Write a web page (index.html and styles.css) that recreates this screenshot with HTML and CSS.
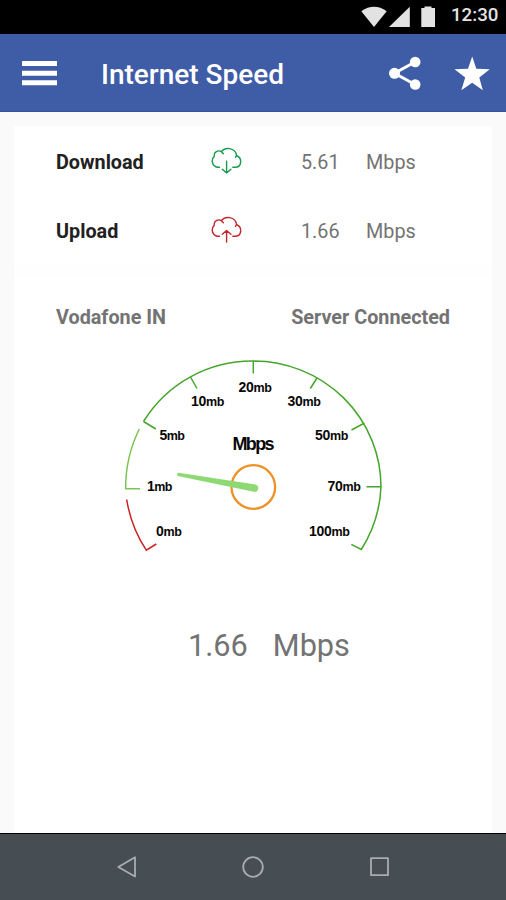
FILE: index.html
```html
<!DOCTYPE html>
<html lang="en">
<head>
<meta charset="utf-8">
<title>Internet Speed</title>
<link rel="stylesheet" href="styles.css">
</head>
<body>
<header class="status">
  <svg class="status-icons" viewBox="360 0 76 34"><path d="M361.3 11.2Q374 2.300 386.700 11.200L374 27Z"/><path d="M409.800 6.700V27H389Z"/><path d="M421.300 8h3.200V6.500h7V8h3.500V27h-13.700Z"/></svg>
  <span class="clock">12:30</span>
</header>
<nav class="appbar">
  <svg class="menu" viewBox="0 0 36 26"><path d="M0 1h35v5H0zM0 10.800h35v5H0zM0 20.300h35v5H0z"/></svg>
  <h1>Internet Speed</h1>
  <svg class="share" viewBox="388 55 34 36"><path class="link" d="M415 62L394.500 73.300L415 84.500"/><circle cx="394.500" cy="73.300" r="5.500"/><circle cx="415.200" cy="62" r="5.300"/><circle cx="415.200" cy="84.500" r="5.300"/></svg>
  <svg class="star" viewBox="454 55 36 36"><path d="M472.200 56.500L476.300 68.800L489.800 69.200L479.300 77.500L482.800 90.200L472.200 82.800L461.300 90.200L465.200 77.500L454.500 69.200L468 68.800Z"/></svg>
</nav>
<main>
  <section class="card speeds">
    <div class="row">
      <b>Download</b>
      <svg class="cloud down" viewBox="0 0 32 28"><path d="M9.500 20.300H7.500A6.500 6.500 0 0 1 4.300 9.200C3.500 5.300 8 2.500 11.500 4.700L13.300 6.800M11.500 4.700C14.500-.3 25.500.3 26.500 8.500L25.500 10.300M26.500 8.500C32.500 11 32 20.300 25 20.300H22.800M16.600 14.200V26M12.300 22.200L16.600 26L20.900 22.200"/></svg>
      <span>5.61</span><span>Mbps</span>
    </div>
    <div class="row">
      <b>Upload</b>
      <svg class="cloud up" viewBox="0 0 32 28"><path d="M9.500 20.300H7.500A6.500 6.500 0 0 1 4.300 9.200C3.500 5.300 8 2.500 11.500 4.700L13.300 6.800M11.500 4.700C14.500-.3 25.500.3 26.500 8.500L25.500 10.300M26.500 8.500C32.500 11 32 20.300 25 20.300H22.800M16.600 26V14.500M12.300 18.300L16.600 14.500L20.900 18.300"/></svg>
      <span>1.66</span><span>Mbps</span>
    </div>
  </section>
  <section class="card test">
    <div class="provider"><b>Vodafone IN</b><b>Server Connected</b></div>
    <svg class="gauge" viewBox="110 350 290 220">
      <path class="green" d="M143.500 421.500A127.700 127.700 0 0 1 253.300 361A127.700 126 0 0 1 381 487A127.700 127.700 0 0 1 361.300 549.500L351.300 544.300M143.500 421.500L155.800 429M190.500 377L197 388.500M253.300 361V373.500M317 378L310.300 388.500M364.500 423L351.500 430M366.500 486.700H381"/>
      <path class="light" d="M139.300 429A132 132 0 0 0 125.700 488.700H140"/>
      <path class="red" d="M126.700 499.500A128 128 0 0 0 146.300 550.200L156.300 544"/>
      <circle cx="253.300" cy="487" r="21.800"/>
      <path class="needle" d="M178.500 472.700L255.500 484.500A3.700 3.700 0 0 1 253.800 491.700L177.800 476Q175.800 474 178.500 472.700Z"/>
      <g class="marks">
        <text x="156" y="536" textLength="26">0<tspan>mb</tspan></text>
        <text x="147" y="491" textLength="25.500">1<tspan>mb</tspan></text>
        <text x="159.500" y="440" textLength="25.500">5<tspan>mb</tspan></text>
        <text x="191" y="406" textLength="33.500">10<tspan>mb</tspan></text>
        <text x="238.500" y="391.500" textLength="33.500">20<tspan>mb</tspan></text>
        <text x="287.500" y="406" textLength="33.500">30<tspan>mb</tspan></text>
        <text x="315" y="440" textLength="33.500">50<tspan>mb</tspan></text>
        <text x="327.500" y="491" textLength="33.500">70<tspan>mb</tspan></text>
        <text x="309" y="536" textLength="41">100<tspan>mb</tspan></text>
      </g>
      <text class="unit" x="232.500" y="450" textLength="42">Mbps</text>
    </svg>
    <div class="result"><span>1.66</span><span>Mbps</span></div>
  </section>
</main>
<footer>
  <svg viewBox="0 0 26 26"><path d="M4.300 13L21 3.300V22.500Z"/></svg>
  <svg viewBox="0 0 26 26"><circle cx="13" cy="13" r="9.800"/></svg>
  <svg viewBox="0 0 26 26"><rect x="4" y="4.200" width="17" height="17"/></svg>
</footer>
</body>
</html>
```
FILE: styles.css
```css
* { box-sizing: border-box; }
body {
  margin: 0;
  height: 900px;
  display: flex;
  flex-direction: column;
  overflow: hidden;
  background: #fafafa;
  color: #737373;
  font-family: Roboto, sans-serif;
  font-size: 19.800px;
}
svg { display: block; flex: none; }
.status {
  height: 34px;
  flex: none;
  display: flex;
  justify-content: flex-end;
  background: #000;
  color: #e4e4e4;
}
.status-icons { width: 76px; height: 34px; fill: #e2e2e2; }
.clock {
  width: 70px;
  padding-left: 15px;
  font-size: 18.7px;
  font-weight: 500;
  line-height: 31px;
}
.appbar {
  height: 78px;
  flex: none;
  display: flex;
  align-items: center;
  padding: 0 16px 0 22px;
  background: #3f5da7;
  border-bottom: 1px solid #3553a0;
  color: #fff;
  fill: #fff;
}
.menu { width: 36px; height: 26px; }
h1 {
  flex: 1;
  margin: 4px 0 0 43px;
  font-size: 28px;
  font-weight: 500;
  line-height: 34px;
}
.share { width: 34px; height: 36px; margin-right: 32px; }
.link { fill: none; stroke: #fff; stroke-width: 3; }
.star { width: 36px; height: 36px; }
main {
  flex: 1;
  min-height: 0;
  display: flex;
  flex-direction: column;
  gap: 13px;
  margin: 14px 14px 0;
  background: #fefefe;
}
.card { background: #fff; border-radius: 2px; }
.speeds { height: 139px; padding: 1px 42px; }
.row {
  height: 69px;
  display: grid;
  grid-template-columns: 153px 92px 65px 1fr;
  align-items: center;
}
.row b, .row span { padding-top: 2px; }
.row b { color: #212121; }
b { font-weight: 700; }
.cloud {
  width: 32px;
  height: 28px;
  margin-left: 0.5px;
  margin-bottom: 1px;
  fill: none;
  stroke-width: 1.4;
  stroke-linecap: round;
  stroke-linejoin: round;
}
.down { stroke: #149b4d; }
.up { stroke: #c5262e; }
.test { flex: 1; padding-top: 28px; }
.provider {
  display: flex;
  justify-content: space-between;
  padding: 0 42px;
  line-height: 24px;
}
.gauge { width: 290px; height: 220px; margin: 20px 0 0 96px; }
.gauge path, .gauge circle { fill: none; stroke-width: 1.5; }
.gauge .green { stroke: #45a52c; }
.gauge .light { stroke: #79c653; }
.gauge .red { stroke: #cc2222; }
.gauge circle { stroke: #ed9226; stroke-width: 2.3; }
.gauge .needle { fill: #8ed974; }
.gauge text { font-family: "Liberation Sans", sans-serif; font-weight: 700; fill: #080808; }
.marks { font-size: 14px; }
.marks tspan { font-size: 12.500px; }
.unit { font-size: 18px; }
.result {
  display: flex;
  gap: 25px;
  margin: 57px 0 0 174px;
  font-size: 30.700px;
  line-height: 38px;
}
footer {
  height: 67px;
  flex: none;
  display: flex;
  justify-content: center;
  gap: 100.500px;
  padding-top: 19.500px;
  background: #464e53;
  border-top: 1px solid #000;
}
footer svg { width: 26px; height: 26px; fill: none; stroke: #a7adb2; stroke-width: 1.800; stroke-linejoin: round; }
```
